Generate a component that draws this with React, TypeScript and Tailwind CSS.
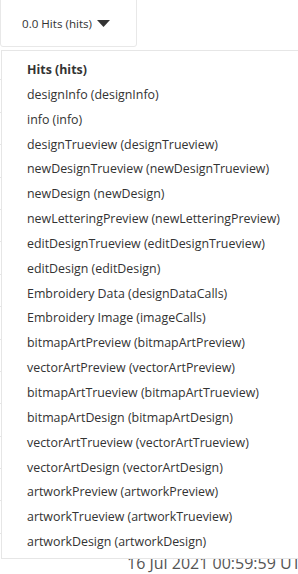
const items = [
  'designInfo (designInfo)',
  'info (info)',
  'designTrueview (designTrueview)',
  'newDesignTrueview (newDesignTrueview)',
  'newDesign (newDesign)',
  'newLetteringPreview (newLetteringPreview)',
  'editDesignTrueview (editDesignTrueview)',
  'editDesign (editDesign)',
  'Embroidery Data (designDataCalls)',
  'Embroidery Image (imageCalls)',
  'bitmapArtPreview (bitmapArtPreview)',
  'vectorArtPreview (vectorArtPreview)',
  'bitmapArtTrueview (bitmapArtTrueview)',
  'bitmapArtDesign (bitmapArtDesign)',
  'vectorArtTrueview (vectorArtTrueview)',
  'vectorArtDesign (vectorArtDesign)',
  'artworkPreview (artworkPreview)',
  'artworkTrueview (artworkTrueview)',
  'artworkDesign (artworkDesign)',
];

const rows = Array.from({ length: 15 }, (_, i) => i);

export default function App() {
  return (
    <div
      className="relative w-[298px] h-[574px] overflow-hidden bg-white text-[#333]"
      style={{ fontFamily: '"Open Sans", "Noto Sans", sans-serif' }}
    >
      {/* background table peeking out */}
      <div className="flex">
        <div className="flex flex-col w-[3px] pt-[48px]">
          {rows.map((r) => (
            <div key={r} className="h-[32.4px] border-b border-[#e6e6e6]" />
          ))}
        </div>
      </div>
      <div className="absolute left-[127px] top-[552px] text-[16px] leading-[22px] text-[#555] whitespace-nowrap">
        16 Jul 2021 00:59:59 UTC
      </div>

      {/* toggle button */}
      <div className="absolute left-0 top-[-4px] w-[137px] h-[51px] border border-[#e8e8e8] rounded-[3px] bg-white flex items-center pl-[21px] pt-[4px]">
        <span className="text-[11.6px]">0.0 Hits (hits)</span>
        <svg width="13" height="7" viewBox="0 0 13 7" className="ml-[5px]">
          <path d="M0 0 L13 0 L6.5 7 Z" fill="#333" />
        </svg>
      </div>

      {/* dropdown menu */}
      <div className="absolute left-[1px] top-[50px] w-[320px] h-[509px] border border-[#e6e6e6] bg-white pt-[7px] pl-[25px]">
        <ul className="flex flex-col text-[12.4px] leading-[24.85px]">
          <li className="font-bold">Hits (hits)</li>
          {items.map((t) => (
            <li key={t}>{t}</li>
          ))}
        </ul>
      </div>
    </div>
  );
}
